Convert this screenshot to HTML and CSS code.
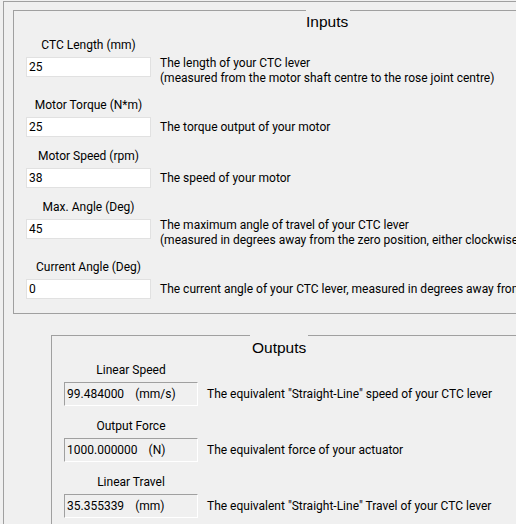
FILE: index.html
```html
<!DOCTYPE html>
<html lang="en">

<head>
    <meta charset="UTF-8" />
    <title>CTC Lever Calculator</title>
    <link rel="stylesheet" href="styles.css">
</head>

<body>
    <div class="frame">
        <!-- Inputs -->
        <fieldset class="group group-inputs">
            <legend class="gap"></legend>
            <div class="group-title">Inputs</div>

            <div class="field">
                <div class="field-label">CTC Length (mm)</div>
                <div class="field-line tall">
                    <input class="text-input" type="text" value="25">
                    <div class="desc">The length of your CTC lever<br>(measured from the motor shaft centre to the rose joint centre)</div>
                </div>
            </div>
            <div class="field">
                <div class="field-label">Motor Torque (N*m)</div>
                <div class="field-line">
                    <input class="text-input" type="text" value="25">
                    <div class="desc">The torque output of your motor</div>
                </div>
            </div>
            <div class="field">
                <div class="field-label">Motor Speed (rpm)</div>
                <div class="field-line">
                    <input class="text-input" type="text" value="38">
                    <div class="desc">The speed of your motor</div>
                </div>
            </div>
            <div class="field">
                <div class="field-label">Max. Angle (Deg)</div>
                <div class="field-line tall">
                    <input class="text-input" type="text" value="45">
                    <div class="desc">The maximum angle of travel of your CTC lever<br>(measured in degrees away from the zero position, either clockwise or anti-clockwise)</div>
                </div>
            </div>
            <div class="field">
                <div class="field-label">Current Angle (Deg)</div>
                <div class="field-line">
                    <input class="text-input" type="text" value="0">
                    <div class="desc">The current angle of your CTC lever, measured in degrees away from the zero position</div>
                </div>
            </div>
        </fieldset>

        <!-- Outputs -->
        <fieldset class="group group-outputs">
            <legend class="gap"></legend>
            <div class="group-title">Outputs</div>

            <div class="field">
                <div class="field-label">Linear Speed</div>
                <div class="field-line">
                    <div class="readout"><span>99.484000</span><span class="unit">(mm/s)</span></div>
                    <div class="desc">The equivalent "Straight-Line" speed of your CTC lever</div>
                </div>
            </div>
            <div class="field">
                <div class="field-label">Output Force</div>
                <div class="field-line">
                    <div class="readout"><span>1000.000000</span><span class="unit">(N)</span></div>
                    <div class="desc">The equivalent force of your actuator</div>
                </div>
            </div>
            <div class="field">
                <div class="field-label">Linear Travel</div>
                <div class="field-line">
                    <div class="readout"><span>35.355339</span><span class="unit">(mm)</span></div>
                    <div class="desc">The equivalent "Straight-Line" Travel of your CTC lever</div>
                </div>
            </div>
        </fieldset>
    </div>
</body>

</html>
```
FILE: styles.css
```css
* {
    box-sizing: border-box;
}

html,
body {
    margin: 0;
    padding: 0;
    background: #f0f0f0;
    overflow: hidden;
    font-family: Roboto, "Noto Sans", sans-serif;
    font-size: 12px;
    color: #000;
}

.frame {
    width: 1000px;
    height: 640px;
    margin: 1px 0 0 3px;
    padding: 8px 0 0 9px;
    border-top: 1px solid #a0a0a0;
    border-left: 1px solid #a0a0a0;
}

.group {
    margin: 0;
    min-width: 0;
    padding: 0 12px 14px;
    border: 1px solid #a0a0a0;
}

.group-inputs {
    width: 760px;
}

.group-outputs {
    width: 700px;
    margin: 21px 0 0 38px;
    padding-bottom: 30px;
}

/* empty legend only cuts the gap in the top border */
.gap {
    display: block;
    height: 1px;
    padding: 0;
}

.group-inputs .gap {
    width: 44px;
    margin-left: 280px;
}

.group-outputs .gap {
    width: 58px;
    margin-left: 186px;
}

.group-title {
    font-family: "Liberation Sans", Arial, sans-serif;
    font-size: 15.5px;
    line-height: 17px;
}

.group-inputs .group-title {
    margin: 2px 0 7px 280px;
}

.group-outputs .group-title {
    margin: 3px 0 6px 188px;
}

.group-inputs .field + .field {
    margin-top: 11px;
}

.group-outputs .field + .field {
    margin-top: 12px;
}

.field-label {
    width: 125px;
    line-height: 16px;
    margin-bottom: 4px;
    text-align: center;
    white-space: nowrap;
}

.group-outputs .field-label {
    width: 134px;
}

.field-line {
    display: flex;
    align-items: center;
}

.field-line.tall {
    align-items: flex-start;
}

.text-input {
    width: 125px;
    height: 20px;
    margin: 0;
    padding: 0 2px;
    border: 1px solid #e1e1e1;
    background: #fff;
    font: 12px Roboto, "Noto Sans", sans-serif;
    color: #000;
    outline: none;
}

.readout {
    display: flex;
    align-items: center;
    width: 134px;
    height: 24px;
    padding: 0 2px;
    border-top: 1px solid #a0a0a0;
    border-left: 1px solid #a0a0a0;
    border-right: 1px solid #fff;
    border-bottom: 1px solid #fff;
    white-space: nowrap;
}

.readout .unit {
    margin-left: 11px;
}

.desc {
    margin-left: 9px;
    line-height: 15px;
    white-space: nowrap;
}

.tall .desc {
    margin-top: -1px;
}
```
